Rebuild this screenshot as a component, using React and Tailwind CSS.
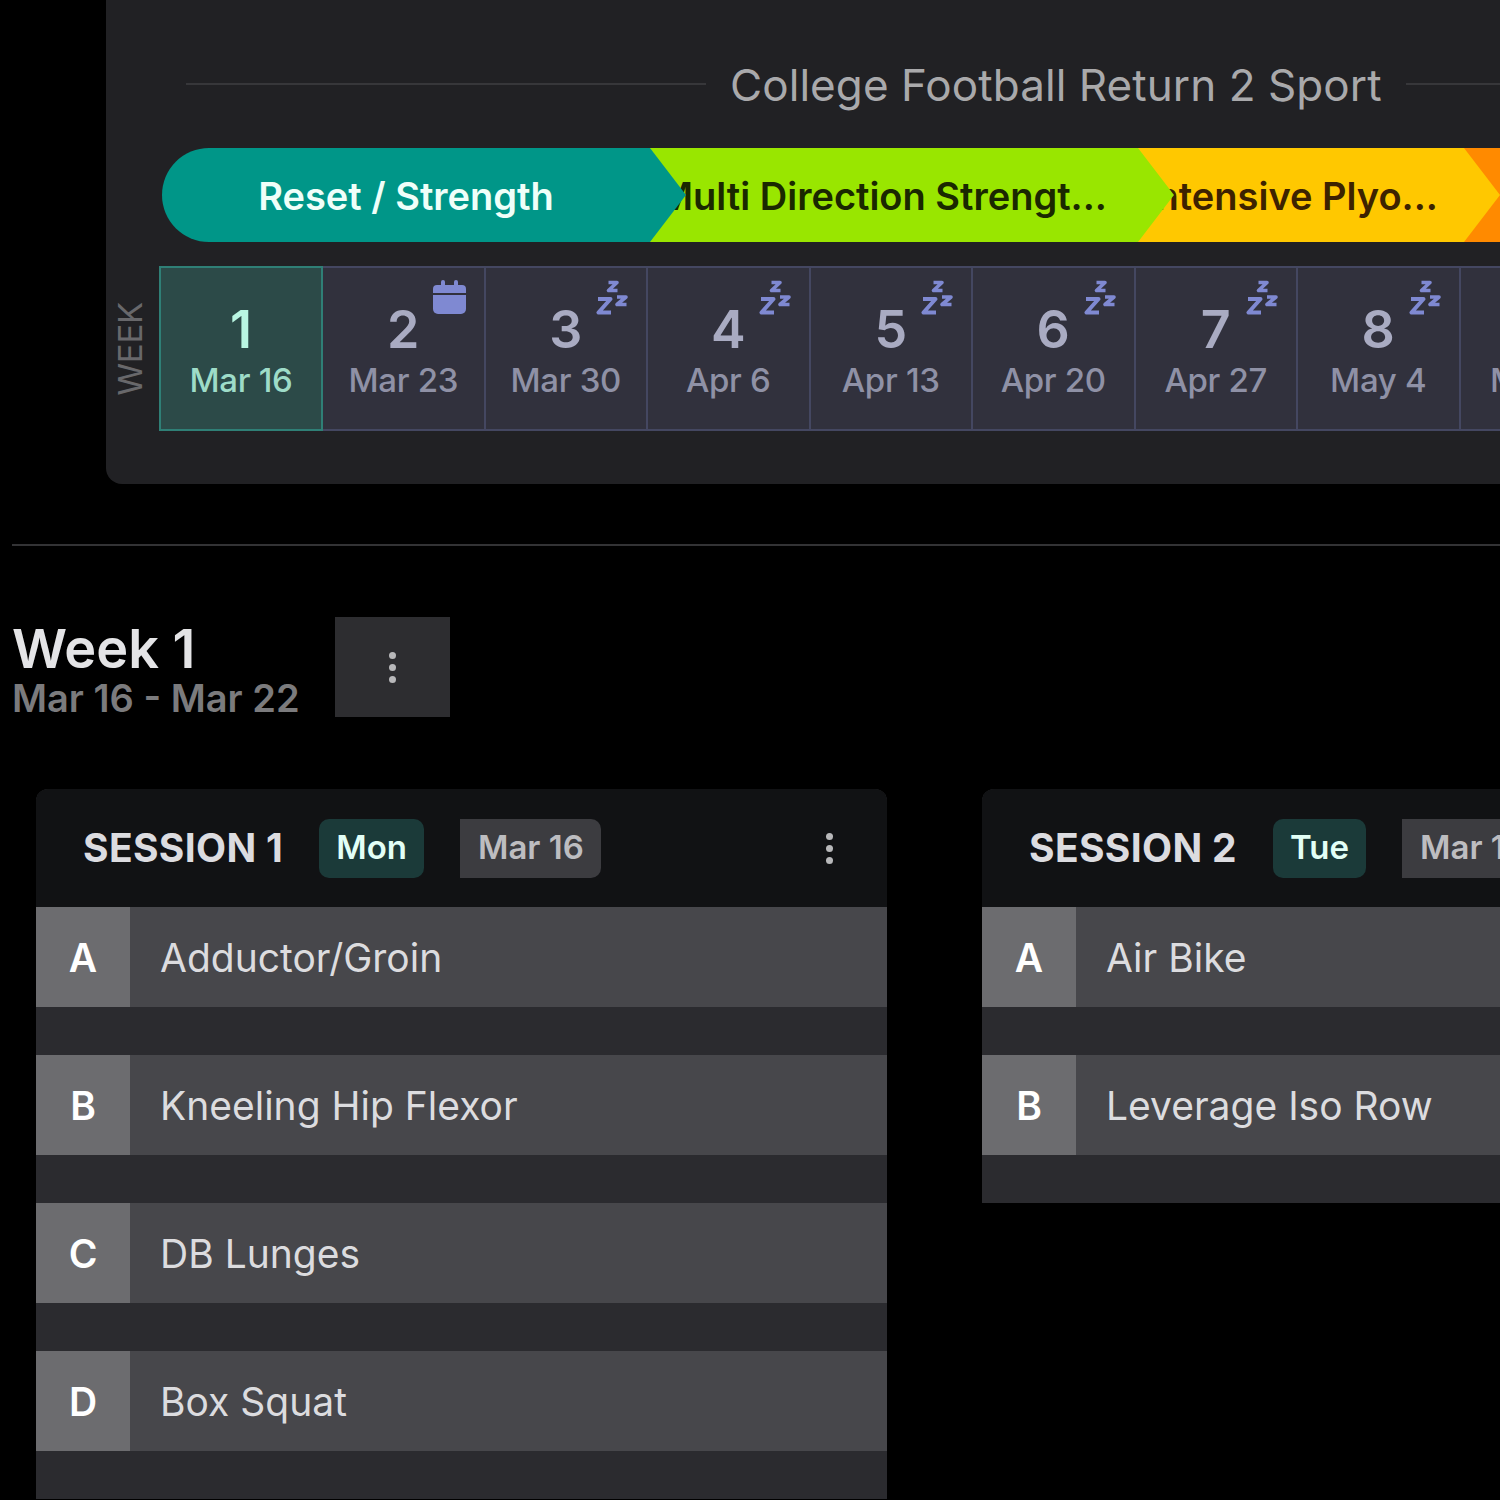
import { Fragment } from "react";

const weeks = [
  { n: 1, date: "Mar 16", active: true },
  { n: 2, date: "Mar 23", icon: "calendar" },
  { n: 3, date: "Mar 30", icon: "sleep" },
  { n: 4, date: "Apr 6", icon: "sleep" },
  { n: 5, date: "Apr 13", icon: "sleep" },
  { n: 6, date: "Apr 20", icon: "sleep" },
  { n: 7, date: "Apr 27", icon: "sleep" },
  { n: 8, date: "May 4", icon: "sleep" },
  { n: 9, date: "May 11", icon: "sleep" },
];

const sessions = [
  { title: "SESSION 1", day: "Mon", date: "Mar 16", rows: ["Adductor/Groin", "Kneeling Hip Flexor", "DB Lunges", "Box Squat"] },
  { title: "SESSION 2", day: "Tue", date: "Mar 17", rows: ["Air Bike", "Leverage Iso Row"] },
];

function SleepIcon() {
  return (
    <svg width="32" height="35" viewBox="0 0 32 35" fill="none" stroke="#7f89d2" strokeWidth="4" strokeLinejoin="round">
      <path d="M2 19 H14.5 L2.5 32.5 H15" />
      <path d="M12.5 2.5 H21 L12.5 10.5 H21.5" strokeWidth="3.6" />
      <path d="M21 17 H30 L21 24.5 H30.5" strokeWidth="3.6" />
    </svg>
  );
}

function CalendarIcon() {
  return (
    <svg width="33" height="34" viewBox="0 0 33 34" fill="#7f89d2">
      <rect x="8" y="0" width="4" height="8" rx="2" />
      <rect x="21" y="0" width="4" height="8" rx="2" />
      <path d="M4 5 H29 A4 4 0 0 1 33 9 V13 H0 V9 A4 4 0 0 1 4 5 Z" />
      <path d="M0 15 H33 V29 A5 5 0 0 1 28 34 H5 A5 5 0 0 1 0 29 Z" />
    </svg>
  );
}

function Dots({ color = "bg-[#b8b8ba]" }) {
  return (
    <div className="flex flex-col gap-[5px]">
      <span className={`w-[7px] h-[7px] rounded-full ${color}`} />
      <span className={`w-[7px] h-[7px] rounded-full ${color}`} />
      <span className={`w-[7px] h-[7px] rounded-full ${color}`} />
    </div>
  );
}

function WeekCell({ week }) {
  return (
    <div
      className={`relative shrink-0 h-[165px] border-y-2 flex flex-col items-center pt-[32px] ${
        week.active
          ? "w-[164px] bg-[#2c4a48] border-2 border-[#2f7f76]"
          : "w-[162.5px] bg-[#31313d] border-[#444761] border-r-2"
      }`}
    >
      <div className={`text-[52px] leading-[60px] font-semibold ${week.active ? "text-[#b9f6e2]" : "text-[#a9abc2]"}`}>{week.n}</div>
      <div className={`text-[33px] leading-[40px] font-medium tracking-[-0.3px] ${week.active ? "text-[#9edcc8]" : "text-[#8f91a6]"}`}>{week.date}</div>
      {week.icon && (
        <div className="absolute right-[18px] top-[12px]">{week.icon === "sleep" ? <SleepIcon /> : <CalendarIcon />}</div>
      )}
    </div>
  );
}

function Session({ session }) {
  return (
    <div className="w-[851px] shrink-0 rounded-t-xl overflow-hidden bg-[#2b2b2f]">
      <div className="h-[118px] bg-[#111214] flex items-center pl-[47px] pr-[54px]">
        <span className="text-[39px] font-bold tracking-[0.35px] text-[#dcdce0] mr-[36px] whitespace-nowrap">{session.title}</span>
        <span className="h-[59px] px-[17px] flex items-center rounded-[10px] bg-[#1b3a39] text-[#e2fff6] text-[33px] font-semibold mr-[36px]">
          {session.day}
        </span>
        <span className="h-[59px] pl-[18px] pr-[17px] flex items-center rounded-r-[10px] bg-[#3c3c40] text-[#bdbdc0] text-[33px] font-semibold whitespace-nowrap">
          {session.date}
        </span>
        <div className="ml-auto">
          <Dots />
        </div>
      </div>
      {session.rows.map((row, i) => (
        <Fragment key={row}>
          <div className="h-[100px] mb-[48px] flex items-center bg-[#47474b]">
            <div className="w-[94px] h-full pt-[2px] flex items-center justify-center bg-[#6c6c6f] text-white text-[39px] font-semibold">
              {"ABCD"[i]}
            </div>
            <div className="pl-[30px] pt-[2px] text-[39px] text-[#dcdcdf]">{row}</div>
          </div>
        </Fragment>
      ))}
    </div>
  );
}

export default function App() {
  return (
    <div className="w-[1500px] h-[1500px] overflow-hidden bg-black font-['Inter',sans-serif]">
      {/* Plan overview panel */}
      <div className="ml-[106px] h-[484px] rounded-bl-2xl bg-[#212124] pt-[60px]">
        <div className="flex items-center pl-[80px] h-[50px]">
          <div className="w-[520px] h-[2px] mb-[2px] bg-[#37373a]" />
          <div className="mx-[24px] text-[44px] leading-[50px] tracking-[0.07px] text-[#a9a9ab] whitespace-nowrap">College Football Return 2 Sport</div>
          <div className="flex-1 h-[2px] mb-[2px] bg-[#37373a]" />
        </div>

        {/* Phases */}
        <div className="mt-[38px] ml-[56px] h-[94px] flex overflow-hidden rounded-l-[47px]">
          <div className="relative z-30 shrink-0 w-[524px] -mr-[36px] h-full bg-[#009688] pr-[36px] pt-[2px] flex items-center justify-center text-[38px] font-semibold text-[#effff9] [clip-path:polygon(0_0,488px_0,100%_50%,488px_100%,0_100%)]">
            Reset / Strength
          </div>
          <div className="relative z-20 shrink-0 w-[524px] -mr-[36px] h-full bg-[#99e600] pr-[59px] pt-[2px] flex items-center justify-center text-[38px] font-semibold text-[#1a2800] whitespace-nowrap overflow-hidden [clip-path:polygon(0_0,488px_0,100%_50%,488px_100%,0_100%)]">
            Multi Direction Strengt...
          </div>
          <div className="relative z-10 shrink-0 w-[362px] -mr-[36px] h-full bg-[#ffc800] pr-[55px] pt-[2px] flex items-center justify-center text-[38px] font-semibold text-[#3d2200] whitespace-nowrap overflow-hidden [clip-path:polygon(0_0,326px_0,100%_50%,326px_100%,0_100%)]">
            Intensive Plyo...
          </div>
          <div className="shrink-0 w-[300px] h-full bg-[#ff8a00]" />
        </div>

        {/* Weeks */}
        <div className="mt-[24px] flex items-center">
          <div className="w-[53px] shrink-0 flex justify-center pr-[4px]">
            <span className="[writing-mode:vertical-rl] rotate-180 text-[33px] leading-none tracking-[-0.2px] text-[#68686b]">WEEK</span>
          </div>
          <div className="flex">
            {weeks.map((week) => (
              <WeekCell key={week.n} week={week} />
            ))}
          </div>
        </div>
      </div>

      <div className="ml-[12px] mt-[60px] h-[2px] bg-[#333335]" />

      {/* Week heading */}
      <div className="mt-[71px] ml-[12px] h-[100px] flex items-start">
        <div className="w-[323px] pt-[4px]">
          <div className="text-[54px] leading-[56px] font-semibold text-[#e4e4e6]">Week 1</div>
          <div className="text-[38px] leading-[42px] font-semibold text-[#7b7b7d]">Mar 16 - Mar 22</div>
        </div>
        <div className="w-[115px] h-[100px] flex items-center justify-center bg-[#2d2d30]">
          <Dots />
        </div>
      </div>

      {/* Sessions */}
      <div className="mt-[72px] ml-[36px] flex items-start gap-[95px]">
        {sessions.map((session) => (
          <Session key={session.title} session={session} />
        ))}
      </div>
    </div>
  );
}
